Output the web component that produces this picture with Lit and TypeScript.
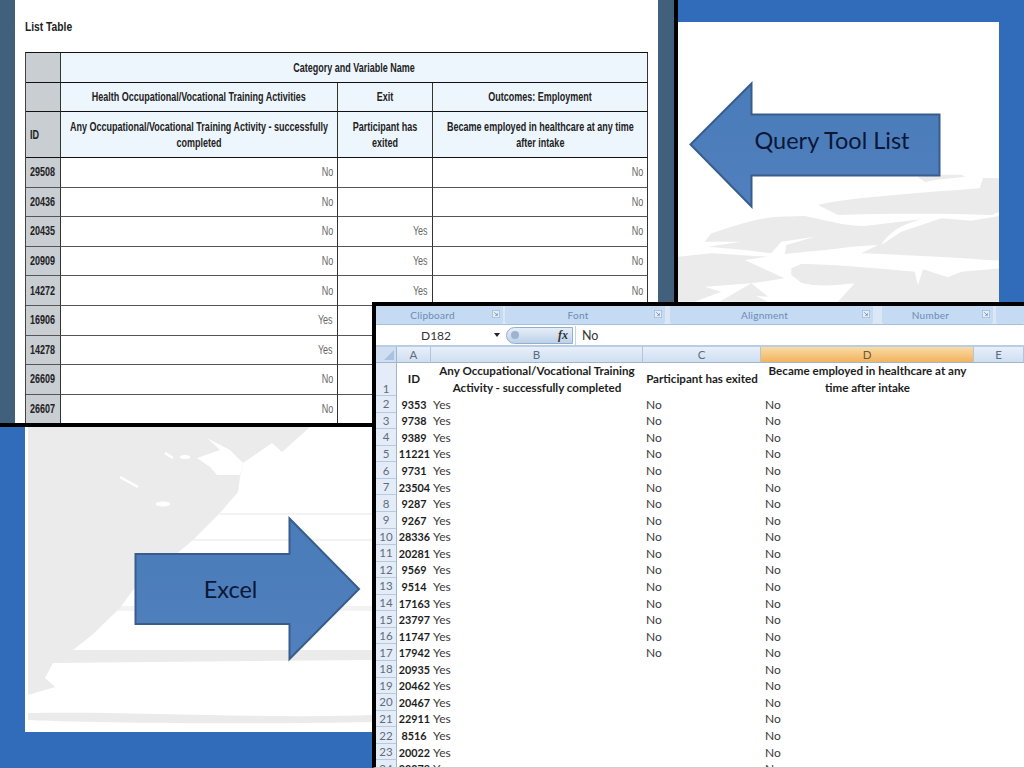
import { LitElement, html, css, svg } from "lit";
import { customElement } from "lit/decorators.js";

const LIST_ROWS: [string, string, string, string][] = [
  ["29508", "No", "", "No"],
  ["20436", "No", "", "No"],
  ["20435", "No", "Yes", "No"],
  ["20909", "No", "Yes", "No"],
  ["14272", "No", "Yes", "No"],
  ["16906", "Yes", "", ""],
  ["14278", "Yes", "", ""],
  ["26609", "No", "", ""],
  ["26607", "No", "", ""],
];

const IDS = ["9353","9738","9389","11221","9731","23504","9287","9267","28336","20281","9569","9514","17163","23797","11747","17942","20935","20462","20467","22911","8516","20022","20078"];
const GROUPS = [
  ["Clipboard", "g1"],
  ["Font", "g2"],
  ["Alignment", "g3"],
  ["Number", "g4"],
  ["", "g5"],
];
const COLS = [["A", ""], ["B", ""], ["C", ""], ["D", "sel"], ["E", ""]];

@customElement("app-root")
export class AppRoot extends LitElement {
  static styles = css`
    :host { display: block; position: relative; width: 1024px; height: 768px; overflow: hidden; background: #316cbb; font-family: "Liberation Sans", Arial, sans-serif; }
    .slide { box-sizing: border-box; width: 1024px; height: 768px; padding: 22px 25px 36px; }
    .panel { position: relative; height: 100%; background: #fff; overflow: hidden; }
    .mark { position: absolute; inset: 0; width: 100%; height: 100%; }
    .arrows { position: absolute; left: 0; top: 0; width: 1024px; height: 768px; }
    .arrow-label { font-family: Lato, sans-serif; font-size: 23.5px; fill: #0b1736; text-anchor: middle; }

    .list-win { position: absolute; left: 0; top: 0; width: 678px; height: 427px; box-sizing: border-box; border-right: 4px solid #000; border-bottom: 4px solid #000; display: flex; background: #41607b; }
    .page { margin: 0 16px 0 15px; flex: 1; background: #fff; padding: 18px 10px 0; overflow: hidden; }
    .title { height: 34px; font-size: 12px; font-weight: bold; color: #222; line-height: 18px; }
    .title .t { transform: scaleX(.855); }
    .t { display: inline-block; white-space: nowrap; transform: scaleX(.75); transform-origin: left center; }
    .tbl { display: grid; width: 623px; grid-template-columns: 35px 277px 95px 215px; grid-template-rows: 30px 29px 46px repeat(9, 29.6px); border-top: 1px solid #111; border-left: 1px solid #444; box-sizing: border-box; }
    .c { box-sizing: border-box; border-right: 1px solid #333; border-bottom: 1px solid #555; display: flex; align-items: center; justify-content: center; min-width: 0; font-size: 12px; color: #666; padding: 0 4px; overflow: hidden; }
    .h { background: #eef6fd; color: #222; font-weight: bold; text-align: center; line-height: 16px; border-bottom-color: #111; }
    .h .t { transform-origin: center; flex: none; }
    .span { grid-column: span 3; }
    .id { background: #c9ced3; color: #222; font-weight: bold; justify-content: flex-start; }
    .id .t { flex: none; }
    .idh { border-bottom-color: #111; }
    .r { justify-content: flex-end; }
    .r .t { transform-origin: right center; }

    .xl { position: absolute; left: 372px; top: 302px; right: 0; bottom: 0; box-sizing: border-box; border-left: 4px solid #000; border-top: 4px solid #000; border-bottom: 1px solid #cfcfcf; background: #fff; overflow: hidden; font-family: Lato, sans-serif; display: flex; flex-direction: column; }
    .ribbon { display: flex; height: 18px; background: #dbe7f5; flex: none; border-bottom: 1px solid #a6bfdc; box-sizing: content-box; }
    .grp { position: relative; display: flex; align-items: center; justify-content: center; background: #c5daf3; border-radius: 0 0 3px 3px; font-size: 10px; letter-spacing: .25px; color: #6c8cb4; box-sizing: border-box; padding-right: 14px; }
    .g1 { width: 127px; }
    .g2 { width: 160px; margin-left: 2px; }
    .g3 { width: 203px; margin-left: 5px; }
    .g4 { width: 111px; margin-left: 9px; }
    .g5 { flex: 1; margin-left: 3px; }
    .launch { position: absolute; right: 3px; top: 4px; width: 8px; height: 8px; }
    .fbar { display: flex; align-items: center; height: 20px; flex: none; border-bottom: 2px solid #b9cde4; font-size: 12.5px; color: #333; }
    .name { width: 118px; padding-left: 45px; box-sizing: border-box; font-size: 12px; }
    .drop { width: 0; height: 0; border: 3.5px solid transparent; border-top: 4px solid #222; border-bottom: 0; margin-right: 6px; }
    .fxbtn { position: relative; width: 67px; height: 17px; box-sizing: border-box; border: 1px solid #92afd0; border-radius: 9px 0 0 9px; background: linear-gradient(#e6eef8, #bdd1e9); font: italic bold 12px "Liberation Serif", serif; color: #333; display: flex; align-items: center; justify-content: flex-end; padding-right: 4px; }
    .fxbtn::before { content: ""; position: absolute; left: 4px; top: 3px; width: 8px; height: 8px; border-radius: 50%; background: #9db4ce; }
    .fval { border-left: 1px solid #c6d3e2; padding-left: 6px; height: 19px; line-height: 19px; margin-left: 2px; }
    .sheet { display: grid; grid-template-columns: 21px 34px 212px 118px 213px 1fr; grid-template-rows: 16px 33px repeat(23, 16.57px); font-size: 12px; color: #3a3a3a; }
    .corner { background: #cfdff1; border-right: 1px solid #9eb6ce; border-bottom: 1px solid #9eb6ce; position: relative; }
    .corner::after { content: ""; position: absolute; right: 2px; bottom: 2px; border: 5px solid transparent; border-right-color: #a9c2df; border-bottom-color: #a9c2df; }
    .col { display: flex; align-items: center; justify-content: center; background: linear-gradient(#e8eff9, #cfdff1); border-right: 1px solid #b0c4da; border-bottom: 1px solid #9eb6ce; color: #5c6c80; box-sizing: border-box; font-size: 11.5px; }
    .col.sel { background: linear-gradient(#f9dca6, #f2b35e); color: #6c5a3a; }
    .rh { display: flex; align-items: center; justify-content: center; background: #e4ecf7; border-right: 1px solid #9eb6ce; border-bottom: 1px solid #b7c9dd; color: #5c6c80; box-sizing: border-box; font-size: 11.5px; }
    .rh1 { align-items: flex-end; }
    .hd { display: flex; align-items: center; justify-content: center; text-align: center; font-weight: 700; color: #1d1d1d; line-height: 16.5px; font-size: 11.6px; }
    .v { display: flex; align-items: center; padding-left: 2px; min-width: 0; }
    .idv { justify-content: center; font-weight: 700; color: #1d1d1d; padding: 0; }
    .idv span { display: inline-block; transform: scaleX(.9); }
    .cv { padding-left: 3px; }
    .dv { padding-left: 4px; }
  `;

  private watermark() {
    return svg`<svg class="mark" viewBox="0 0 974 710" preserveAspectRatio="none" aria-hidden="true">
      <g fill="#ebebeb">
        <g transform="translate(653 168) scale(.3333)">
          <path d="M717 -40 L800 -46 L850 -46 L862 -40 L770 -30 L742 -24 Z"/>
          <path d="M420 45 C500 25 700 10 905 -5 L915 -36 L965 -35 L965 65 L940 75 C800 70 600 70 480 75 Z"/>
          <path d="M80 155 L100 130 C160 110 230 85 300 80 L380 78 C440 90 500 108 560 108 L730 88 C690 100 640 115 610 165 L670 125 L790 85 L880 92 L965 78 L965 212 L930 210 C800 200 680 195 550 190 L600 165 L520 170 C450 180 380 185 320 192 L325 165 L410 140 L310 155 L280 190 L200 180 L90 170 L190 155 Z"/>
          <path d="M0 200 L100 190 L270 200 L200 210 L320 265 L220 280 L80 290 L130 305 L50 335 L0 335 Z"/>
          <path d="M340 235 L370 222 C450 222 600 235 710 245 L720 285 L735 238 L810 262 L850 245 L965 235 L965 335 L480 335 L530 280 C480 285 420 292 370 278 L340 255 Z"/>
          <path d="M125 335 L220 280 L270 320 L235 318 L270 335 Z"/>
        </g>
        <path d="M3 405 H285 L257 430 L247 421 L218 441 L215 455 L213 470 L195 491 L168 518 L108 568 L95 586 L67 613 L48 628 H347 V638 L28 641 L20 656 L30 665 L3 673 Z"/>
        <path d="M3 691 C100 689 250 697 347 693 V700 C250 702 100 702 3 698 Z"/>
        <path d="M195 491 H347 V493 H195 Z" opacity=".6"/>
        <path d="M168 517 H347 V519 H168 Z" opacity=".6"/>
        <path d="M92 584 H347 V589 H92 Z" opacity=".6"/>
      </g>
      <g fill="#fff" stroke="#fff">
        <path d="M95 455 L113 465" stroke-width="2.5"/>
        <path d="M140 431 L148 436" stroke-width="2.5"/>
        <ellipse cx="160" cy="435" rx="5" ry="1.5"/>
        <ellipse cx="138" cy="482" rx="7" ry="2"/>
        <path d="M182 416 L195 428 L172 436 L185 445 L192 453 L215 453 L218 441 L205 428 Z" stroke="none"/>
      </g>
    </svg>`;
  }

  private arrows() {
    return svg`<svg class="arrows" viewBox="0 0 1024 768">
      <defs>
        <linearGradient id="af" x1="0" y1="0" x2="0" y2="1">
          <stop offset="0" stop-color="#4a7cba"/><stop offset="1" stop-color="#5080bd"/>
        </linearGradient>
      </defs>
      <path d="M690.5 144.5 L751.5 83.5 V114.5 H939.5 V175.5 H751.5 V206.5 Z" fill="url(#af)" stroke="#385d8a" stroke-width="2"/>
      <text class="arrow-label" x="832" y="148.5">Query Tool List</text>
      <path d="M135.5 554 H289.5 V518.5 L359 589 L289.5 659 V624 H135.5 Z" fill="url(#af)" stroke="#385d8a" stroke-width="2"/>
      <text class="arrow-label" x="230.5" y="598">Excel</text>
    </svg>`;
  }

  private listWindow() {
    return html`<section class="list-win">
      <div class="page">
        <div class="title"><span class="t">List Table</span></div>
        <div class="tbl">
          <div class="c id idh"></div>
          <div class="c h span"><span class="t">Category and Variable Name</span></div>
          <div class="c id idh"></div>
          <div class="c h"><span class="t">Health Occupational/Vocational Training Activities</span></div>
          <div class="c h"><span class="t">Exit</span></div>
          <div class="c h"><span class="t">Outcomes: Employment</span></div>
          <div class="c id idh"><span class="t">ID</span></div>
          <div class="c h"><span class="t">Any Occupational/Vocational Training Activity - successfully<br />completed</span></div>
          <div class="c h"><span class="t">Participant has<br />exited</span></div>
          <div class="c h"><span class="t">Became employed in healthcare at any time<br />after intake</span></div>
          ${LIST_ROWS.map(
            ([id, a, b, d]) => html`
              <div class="c id"><span class="t">${id}</span></div>
              <div class="c r"><span class="t">${a}</span></div>
              <div class="c r"><span class="t">${b}</span></div>
              <div class="c r"><span class="t">${d}</span></div>
            `
          )}
        </div>
      </div>
    </section>`;
  }

  private launcher() {
    return svg`<svg class="launch" viewBox="0 0 9 9">
      <rect x=".5" y=".5" width="8" height="8" fill="#e3edf8" stroke="#a9c0da"/>
      <path d="M2.5 2.5 L6 6 M6 3.5 V6 H3.5" fill="none" stroke="#7f96b4"/>
    </svg>`;
  }

  private excel() {
    return html`<section class="xl">
      <div class="ribbon">
        ${GROUPS.map(
          ([label, cls]) => html`<div class="grp ${cls}">${label}${label ? this.launcher() : ""}</div>`
        )}
      </div>
      <div class="fbar">
        <div class="name">D182</div>
        <div class="drop"></div>
        <div class="fxbtn">fx</div>
        <div class="fval">No</div>
      </div>
      <div class="sheet">
        <div class="corner"></div>
        ${COLS.map(([c, s]) => html`<div class="col ${s}">${c}</div>`)}
        <div class="rh rh1">1</div>
        <div class="hd">ID</div>
        <div class="hd">Any Occupational/Vocational Training<br />Activity - successfully completed</div>
        <div class="hd">Participant has exited</div>
        <div class="hd">Became employed in healthcare at any<br />time after intake</div>
        <div></div>
        ${IDS.map(
          (id, i) => html`
            <div class="rh">${i + 2}</div>
            <div class="v idv"><span>${id}</span></div>
            <div class="v">Yes</div>
            <div class="v cv">${i < 16 ? "No" : ""}</div>
            <div class="v dv">No</div>
            <div></div>
          `
        )}
      </div>
    </section>`;
  }

  render() {
    return html`
      <div class="slide"><div class="panel">${this.watermark()}</div></div>
      ${this.arrows()}
      ${this.listWindow()}
      ${this.excel()}
    `;
  }
}
